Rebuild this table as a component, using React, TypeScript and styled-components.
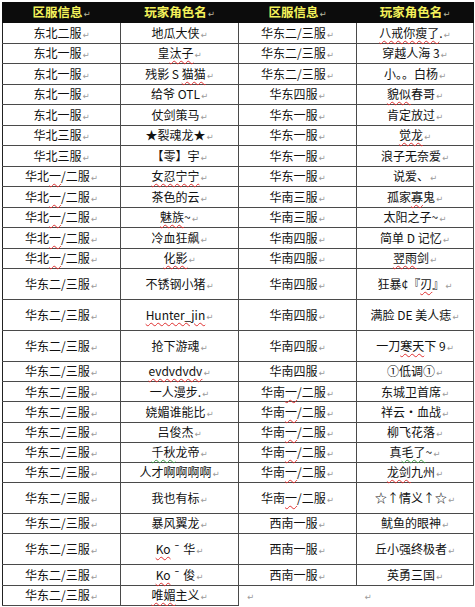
import React from "react";
import styled, { createGlobalStyle } from "styled-components";

type Entry = [string, string, boolean?];

// {..} = red spell-check squiggle, [..] = green grammar squiggle
const leftRows: Entry[] = [
  ["东北二服", "地瓜大侠"],
  ["东北一服", "皇{汰子}"],
  ["东北一服", "残影 S {猫猫}"],
  ["东北一服", "给爷 OTL"],
  ["东北一服", "仗剑策马"],
  ["华北三服", "★裂魂龙★"],
  ["华北三服", "【零】宇"],
  ["华北{一}/二服", "{女忍宁宁}"],
  ["华北{一}/二服", "茶色的云"],
  ["华北{一}/二服", "{魅族}~"],
  ["华北{一}/二服", "冷血狂飙"],
  ["华北{一}/二服", "{化影}"],
  ["华东二/三服", "不锈钢小猪", true],
  ["华东二/三服", "{Hunter_jin}", true],
  ["华东二/三服", "抢下游魂", true],
  ["华东二/三服", "{evdvdvdv}"],
  ["华东二/三服", "一人漫步."],
  ["华东二/三服", "娆媚谁能比"],
  ["华东二/三服", "吕俊杰"],
  ["华东二/三服", "[千秋]龙帝"],
  ["华东二/三服", "人才啊啊啊啊"],
  ["华东二/三服", "我也有标", true],
  ["华东二/三服", "暴风翼龙"],
  ["华东二/三服", "{Ko} ¯ 华", true],
  ["华东二/三服", "{Ko} ¯ 俊"],
  ["华东二/三服", "{唯媚}主义"],
];

const rightRows: Entry[] = [
  ["华东二/三服", "{八戒你瘦了}."],
  ["华东二/三服", "穿越人海 3"],
  ["华东二/三服", "小。。白杨"],
  ["华东四服", "{貌似}春哥"],
  ["华东一服", "肯定放过"],
  ["华东一服", "{觉龙}"],
  ["华东一服", "浪子无奈爱"],
  ["华东一服", "说爱、"],
  ["华南三服", "孤家{寡}鬼"],
  ["华南三服", "太阳之子~"],
  ["华南四服", "简单 D 记忆"],
  ["华南四服", "{翌雨}剑"],
  ["华南四服", "狂暴¢『{刃}』", true],
  ["华南四服", "满脸 DE 美人痣", true],
  ["华南四服", "一刀{寒天}下 9", true],
  ["华南四服", "①低调①"],
  ["华南{一}/二服", "东城卫首席"],
  ["华南{一}/二服", "祥云·血战"],
  ["华南{一}/二服", "柳飞花落"],
  ["华南{一}/二服", "真[毛了]~"],
  ["华南{一}/二服", "{龙剑}九州"],
  ["华南{一}/二服", "☆↑情义↑☆", true],
  ["西南一服", "鱿鱼的眼神"],
  ["西南一服", "丘小强终极者", true],
  ["西南一服", "英勇三国"],
];

const GlobalStyle = createGlobalStyle`
  html, body {
    margin: 0;
    padding: 0;
    background: #ffffff;
  }
  body {
    padding: 2px 0 0 2px;
    font-family: "Noto Sans CJK SC", "Noto Sans", sans-serif;
    color: #000;
  }
`;

const Sheet = styled.table`
  width: 471px;
  border-collapse: collapse;
  table-layout: fixed;
  font-size: 12px;
  line-height: 1;
`;

const Row = styled.tr<{ $h: number }>`
  height: ${(p) => p.$h}px;
`;

const HeadCell = styled.th`
  background: #0c0c0c;
  color: #f4f25a;
  font-weight: 700;
  font-size: 12.5px;
  border: 1px solid #0c0c0c;
  text-align: center;
  padding: 0;
`;

const Cell = styled.td<{ $blank?: boolean; $edge?: boolean; $left?: boolean }>`
  border: ${(p) => (p.$blank ? "none" : "1px solid #4a4a4a")};
  border-left-color: ${(p) => (p.$edge ? "#222" : "#4a4a4a")};
  text-align: ${(p) => (p.$left ? "left" : "center")};
  vertical-align: middle;
  padding: 0;
  white-space: nowrap;
  color: #111;
`;

const Mark = styled.span<{ $light?: boolean }>`
  font-family: "DejaVu Sans", sans-serif;
  font-size: 8.5px;
  font-weight: 400;
  color: ${(p) => (p.$light ? "#b9b9a0" : "#9a9a9a")};
  margin-left: 1px;
`;

const Squiggle = styled.span<{ $green?: boolean }>`
  text-decoration: underline wavy ${(p) => (p.$green ? "#3c9a45" : "#e03030")};
  text-decoration-thickness: 1px;
  text-underline-offset: 2px;
`;

const BlankMark = styled.span`
  display: inline-block;
  margin-left: 8px;
  font-family: "DejaVu Sans", sans-serif;
  font-size: 8.5px;
  color: #9a9a9a;
`;

function Rich({ text }: { text: string }) {
  const parts = text.split(/(\{[^}]*\}|\[[^\]]*\])/).filter(Boolean);
  return (
    <>
      {parts.map((part, i) => {
        if (part.startsWith("{")) return <Squiggle key={i}>{part.slice(1, -1)}</Squiggle>;
        if (part.startsWith("[")) return <Squiggle key={i} $green>{part.slice(1, -1)}</Squiggle>;
        return <React.Fragment key={i}>{part}</React.Fragment>;
      })}
      <Mark>↵</Mark>
    </>
  );
}

const rowHeight = (i: number, tall?: boolean) => (tall ? 31 : i < 12 ? 20.5 : 20.2);

export default function App() {
  return (
    <>
      <GlobalStyle />
      <Sheet>
        <colgroup>
          <col style={{ width: 118 }} />
          <col style={{ width: 118 }} />
          <col style={{ width: 118 }} />
          <col style={{ width: 117 }} />
        </colgroup>
        <thead>
          <Row $h={20}>
            <HeadCell>区服信息<Mark $light>↵</Mark></HeadCell>
            <HeadCell>玩家角色名<Mark $light>↵</Mark></HeadCell>
            <HeadCell>区服信息<Mark $light>↵</Mark></HeadCell>
            <HeadCell>玩家角色名<Mark $light>↵</Mark></HeadCell>
          </Row>
        </thead>
        <tbody>
          {leftRows.map((l, i) => {
            const r = rightRows[i];
            return (
              <Row key={i} $h={rowHeight(i, l[2])}>
                <Cell $edge><Rich text={l[0]} /></Cell>
                <Cell><Rich text={l[1]} /></Cell>
                {r ? (
                  <>
                    <Cell><Rich text={r[0]} /></Cell>
                    <Cell><Rich text={r[1]} /></Cell>
                  </>
                ) : (
                  <>
                    <Cell $blank $left><BlankMark>↵</BlankMark></Cell>
                    <Cell $blank $left><BlankMark>↵</BlankMark></Cell>
                  </>
                )}
              </Row>
            );
          })}
        </tbody>
      </Sheet>
    </>
  );
}
